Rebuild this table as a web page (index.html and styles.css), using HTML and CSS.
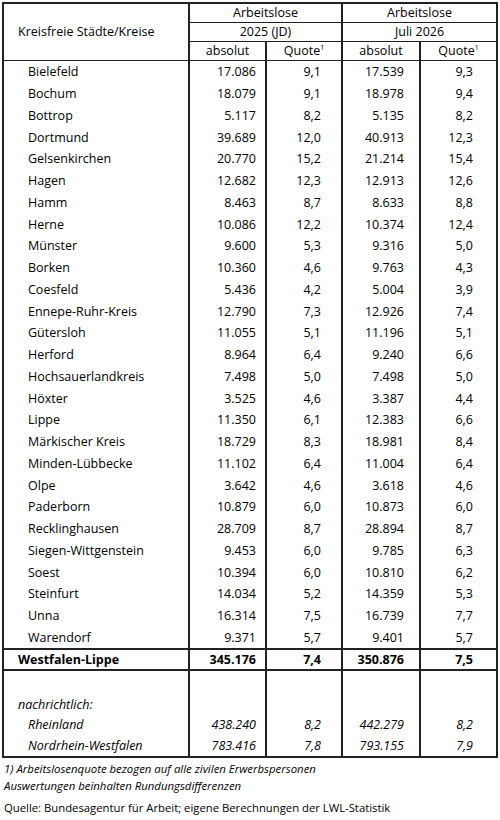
FILE: index.html
```html
<!DOCTYPE html>
<html lang="de">
<head>
  <meta charset="UTF-8">
  <meta name="viewport" content="width=device-width, initial-scale=1.0">
  <title>Arbeitslose Westfalen-Lippe</title>
  <link rel="stylesheet" href="styles.css">
</head>
<body>
  <table class="stats">
    <colgroup>
      <col class="col-name">
      <col class="col-abs1">
      <col class="col-q1">
      <col class="col-abs2">
      <col class="col-q2">
    </colgroup>
    <thead>
      <tr>
        <th rowspan="3" class="name-head">Kreisfreie Städte/Kreise</th>
        <th colspan="2">Arbeitslose</th>
        <th colspan="2">Arbeitslose</th>
      </tr>
      <tr>
        <th colspan="2">2025 (JD)</th>
        <th colspan="2">Juli 2026</th>
      </tr>
      <tr class="sub-head">
        <th>absolut</th>
        <th>Quote<sup>1</sup></th>
        <th>absolut</th>
        <th>Quote<sup>1</sup></th>
      </tr>
    </thead>

    <!-- Kreise -->
    <tbody class="regions">
      <tr><td>Bielefeld</td><td>17.086</td><td>9,1</td><td>17.539</td><td>9,3</td></tr>
      <tr><td>Bochum</td><td>18.079</td><td>9,1</td><td>18.978</td><td>9,4</td></tr>
      <tr><td>Bottrop</td><td>5.117</td><td>8,2</td><td>5.135</td><td>8,2</td></tr>
      <tr><td>Dortmund</td><td>39.689</td><td>12,0</td><td>40.913</td><td>12,3</td></tr>
      <tr><td>Gelsenkirchen</td><td>20.770</td><td>15,2</td><td>21.214</td><td>15,4</td></tr>
      <tr><td>Hagen</td><td>12.682</td><td>12,3</td><td>12.913</td><td>12,6</td></tr>
      <tr><td>Hamm</td><td>8.463</td><td>8,7</td><td>8.633</td><td>8,8</td></tr>
      <tr><td>Herne</td><td>10.086</td><td>12,2</td><td>10.374</td><td>12,4</td></tr>
      <tr><td>Münster</td><td>9.600</td><td>5,3</td><td>9.316</td><td>5,0</td></tr>
      <tr><td>Borken</td><td>10.360</td><td>4,6</td><td>9.763</td><td>4,3</td></tr>
      <tr><td>Coesfeld</td><td>5.436</td><td>4,2</td><td>5.004</td><td>3,9</td></tr>
      <tr><td>Ennepe-Ruhr-Kreis</td><td>12.790</td><td>7,3</td><td>12.926</td><td>7,4</td></tr>
      <tr><td>Gütersloh</td><td>11.055</td><td>5,1</td><td>11.196</td><td>5,1</td></tr>
      <tr><td>Herford</td><td>8.964</td><td>6,4</td><td>9.240</td><td>6,6</td></tr>
      <tr><td>Hochsauerlandkreis</td><td>7.498</td><td>5,0</td><td>7.498</td><td>5,0</td></tr>
      <tr><td>Höxter</td><td>3.525</td><td>4,6</td><td>3.387</td><td>4,4</td></tr>
      <tr><td>Lippe</td><td>11.350</td><td>6,1</td><td>12.383</td><td>6,6</td></tr>
      <tr><td>Märkischer Kreis</td><td>18.729</td><td>8,3</td><td>18.981</td><td>8,4</td></tr>
      <tr><td>Minden-Lübbecke</td><td>11.102</td><td>6,4</td><td>11.004</td><td>6,4</td></tr>
      <tr><td>Olpe</td><td>3.642</td><td>4,6</td><td>3.618</td><td>4,6</td></tr>
      <tr><td>Paderborn</td><td>10.879</td><td>6,0</td><td>10.873</td><td>6,0</td></tr>
      <tr><td>Recklinghausen</td><td>28.709</td><td>8,7</td><td>28.894</td><td>8,7</td></tr>
      <tr><td>Siegen-Wittgenstein</td><td>9.453</td><td>6,0</td><td>9.785</td><td>6,3</td></tr>
      <tr><td>Soest</td><td>10.394</td><td>6,0</td><td>10.810</td><td>6,2</td></tr>
      <tr><td>Steinfurt</td><td>14.034</td><td>5,2</td><td>14.359</td><td>5,3</td></tr>
      <tr><td>Unna</td><td>16.314</td><td>7,5</td><td>16.739</td><td>7,7</td></tr>
      <tr><td>Warendorf</td><td>9.371</td><td>5,7</td><td>9.401</td><td>5,7</td></tr>
    </tbody>

    <!-- Summe -->
    <tbody class="total">
      <tr><td>Westfalen-Lippe</td><td>345.176</td><td>7,4</td><td>350.876</td><td>7,5</td></tr>
    </tbody>

    <!-- nachrichtlich -->
    <tbody class="memo">
      <tr class="spacer"><td></td><td></td><td></td><td></td><td></td></tr>
      <tr><td class="memo-label">nachrichtlich:</td><td></td><td></td><td></td><td></td></tr>
      <tr><td>Rheinland</td><td>438.240</td><td>8,2</td><td>442.279</td><td>8,2</td></tr>
      <tr><td>Nordrhein-Westfalen</td><td>783.416</td><td>7,8</td><td>793.155</td><td>7,9</td></tr>
    </tbody>
  </table>

  <p class="note">1) Arbeitslosenquote bezogen auf alle zivilen Erwerbspersonen</p>
  <p class="note">Auswertungen beinhalten Rundungsdifferenzen</p>
  <p class="source">Quelle: Bundesagentur für Arbeit; eigene Berechnungen der LWL-Statistik</p>
</body>
</html>
```

FILE: styles.css
```css
body {
  font-family: 'Open Sans', 'Noto Sans', sans-serif;
  margin: 0;
  padding: 2px 2px 0 2px;
  background-color: white;
  color: #000;
}

.stats {
  width: 496px;
  border-collapse: collapse;
  table-layout: fixed;
  border: 2px solid #222;
  font-size: 12.5px;
}

.col-name { width: 186px; }
.col-abs1 { width: 77px; }
.col-q1 { width: 76px; }
.col-abs2 { width: 78px; }
.col-q2 { width: 77px; }

.stats th {
  font-weight: 400;
  height: 18px;
  padding: 0;
  line-height: 18px;
  text-align: center;
  border: 1px solid #222;
  border-left-width: 2px;
  border-right-width: 2px;
}

.stats th.name-head {
  text-align: left;
  padding-left: 14px;
}

.stats th sup {
  font-size: 7px;
  vertical-align: 5px;
  line-height: 0;
}

.stats td {
  padding: 0;
  height: 21.75px;
  line-height: 21px;
  text-align: right;
  white-space: nowrap;
  border-left: 2px solid #222;
  border-right: 2px solid #222;
}

.stats td:nth-child(1) {
  text-align: left;
  padding-left: 24px;
}

.stats td:nth-child(2) { padding-right: 9px; }
.stats td:nth-child(3) { padding-right: 20px; }
.stats td:nth-child(4) { padding-right: 15px; }
.stats td:nth-child(5) { padding-right: 23px; }

.regions tr:first-child td {
  border-top: 1px solid #222;
}

.total td {
  font-weight: 700;
  height: 19px;
  line-height: 19px;
  border-top: 2px solid #222;
  border-bottom: 2px solid #222;
}

.stats .total td:nth-child(1) {
  padding-left: 14px;
}

.memo td {
  font-style: italic;
  height: 20.7px;
  line-height: 20px;
}

.memo .spacer td {
  height: 23px;
}

.stats .memo td.memo-label {
  padding-left: 14px;
}

.note {
  margin: 0;
  padding-left: 2px;
  font-size: 11.4px;
  font-style: italic;
  line-height: 17px;
}

.note:first-of-type {
  margin-top: 2px;
}

.source {
  margin: 5px 0 0 0;
  padding-left: 2px;
  font-size: 11.3px;
  line-height: 17px;
}
```
